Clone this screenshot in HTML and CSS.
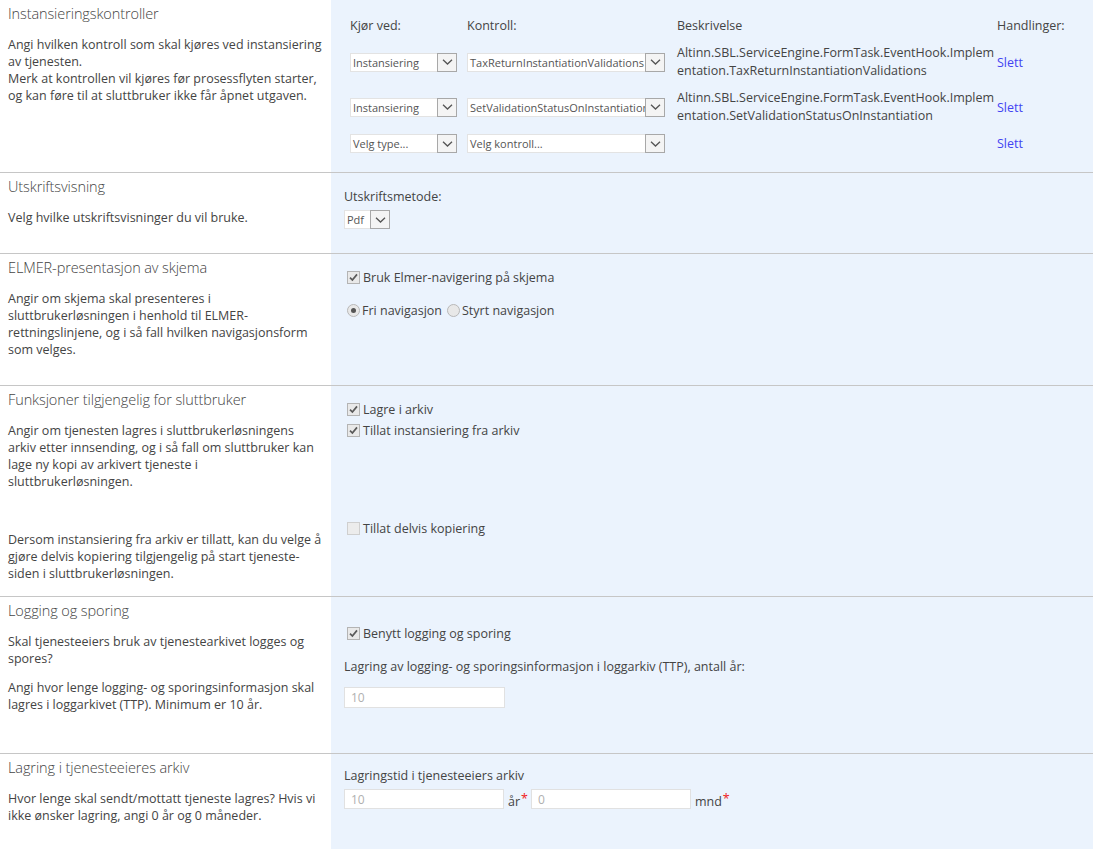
FILE: index.html
```html
<!DOCTYPE html>
<html lang="no">
<head>
    <meta charset="UTF-8">
    <title>Tjenesteinnstillinger</title>
    <link rel="stylesheet" href="styles.css">
</head>
<body>
<div class="page">

    <!-- Instansieringskontroller -->
    <div class="section sec-instans">
        <div class="info">
            <h2 class="title">Instansieringskontroller</h2>
            <p class="desc">Angi hvilken kontroll som skal kjøres ved instansiering av tjenesten.<br>Merk at kontrollen vil kjøres før prosessflyten starter, og kan føre til at sluttbruker ikke får åpnet utgaven.</p>
        </div>
        <div class="controls">
            <div class="hook-grid">
                <div class="col-head">Kjør ved:</div>
                <div class="col-head">Kontroll:</div>
                <div class="col-head">Beskrivelse</div>
                <div class="col-head">Handlinger:</div>

                <div class="dropdown dd-type"><span class="dd-text">Instansiering</span><span class="dd-arrow"><svg width="11" height="6" viewBox="0 0 11 6"><path d="M1 0.8l4.5 4.2 4.5-4.2" fill="none" stroke="#555" stroke-width="1.3"/></svg></span></div>
                <div class="dropdown dd-hook"><span class="dd-text">TaxReturnInstantiationValidations</span><span class="dd-arrow"><svg width="11" height="6" viewBox="0 0 11 6"><path d="M1 0.8l4.5 4.2 4.5-4.2" fill="none" stroke="#555" stroke-width="1.3"/></svg></span></div>
                <div class="hook-desc">Altinn.SBL.ServiceEngine.FormTask.EventHook.Implementation.TaxReturnInstantiationValidations</div>
                <a class="action" href="#">Slett</a>

                <div class="dropdown dd-type"><span class="dd-text">Instansiering</span><span class="dd-arrow"><svg width="11" height="6" viewBox="0 0 11 6"><path d="M1 0.8l4.5 4.2 4.5-4.2" fill="none" stroke="#555" stroke-width="1.3"/></svg></span></div>
                <div class="dropdown dd-hook"><span class="dd-text">SetValidationStatusOnInstantiation</span><span class="dd-arrow"><svg width="11" height="6" viewBox="0 0 11 6"><path d="M1 0.8l4.5 4.2 4.5-4.2" fill="none" stroke="#555" stroke-width="1.3"/></svg></span></div>
                <div class="hook-desc">Altinn.SBL.ServiceEngine.FormTask.EventHook.Implementation.SetValidationStatusOnInstantiation</div>
                <a class="action" href="#">Slett</a>

                <div class="dropdown dd-type"><span class="dd-text">Velg type...</span><span class="dd-arrow"><svg width="11" height="6" viewBox="0 0 11 6"><path d="M1 0.8l4.5 4.2 4.5-4.2" fill="none" stroke="#555" stroke-width="1.3"/></svg></span></div>
                <div class="dropdown dd-hook"><span class="dd-text">Velg kontroll...</span><span class="dd-arrow"><svg width="11" height="6" viewBox="0 0 11 6"><path d="M1 0.8l4.5 4.2 4.5-4.2" fill="none" stroke="#555" stroke-width="1.3"/></svg></span></div>
                <div class="hook-desc"></div>
                <a class="action" href="#">Slett</a>
            </div>
        </div>
    </div>

    <!-- Utskriftsvisning -->
    <div class="section sec-print">
        <div class="info">
            <h2 class="title">Utskriftsvisning</h2>
            <p class="desc">Velg hvilke utskriftsvisninger du vil bruke.</p>
        </div>
        <div class="controls">
            <div class="field-label">Utskriftsmetode:</div>
            <div class="dropdown dd-small"><span class="dd-text">Pdf</span><span class="dd-arrow"><svg width="11" height="6" viewBox="0 0 11 6"><path d="M1 0.8l4.5 4.2 4.5-4.2" fill="none" stroke="#555" stroke-width="1.3"/></svg></span></div>
        </div>
    </div>

    <!-- ELMER -->
    <div class="section sec-elmer">
        <div class="info">
            <h2 class="title">ELMER-presentasjon av skjema</h2>
            <p class="desc">Angir om skjema skal presenteres i sluttbrukerløsningen i henhold til ELMER-rettningslinjene, og i så fall hvilken navigasjonsform som velges.</p>
        </div>
        <div class="controls">
            <div class="option"><span class="check on"><svg width="11" height="11" viewBox="0 0 11 11"><path d="M2 5.6l2.4 2.4 4.6-5.6" fill="none" stroke="#5a5a5a" stroke-width="1.7"/></svg></span>Bruk Elmer-navigering på skjema</div>
            <div class="option radios">
                <span class="radio on"></span>Fri navigasjon
                <span class="radio"></span>Styrt navigasjon
            </div>
        </div>
    </div>

    <!-- Funksjoner -->
    <div class="section sec-functions">
        <div class="info">
            <h2 class="title">Funksjoner tilgjengelig for sluttbruker</h2>
            <p class="desc">Angir om tjenesten lagres i sluttbrukerløsningens<br>arkiv etter innsending, og i så fall om sluttbruker kan lage ny kopi av arkivert tjeneste i sluttbrukerløsningen.</p>
            <p class="desc desc-far">Dersom instansiering fra arkiv er tillatt, kan du velge å gjøre delvis kopiering tilgjengelig på start tjeneste-siden i sluttbrukerløsningen.</p>
        </div>
        <div class="controls">
            <div class="option"><span class="check on"><svg width="11" height="11" viewBox="0 0 11 11"><path d="M2 5.6l2.4 2.4 4.6-5.6" fill="none" stroke="#5a5a5a" stroke-width="1.7"/></svg></span>Lagre i arkiv</div>
            <div class="option tight"><span class="check on"><svg width="11" height="11" viewBox="0 0 11 11"><path d="M2 5.6l2.4 2.4 4.6-5.6" fill="none" stroke="#5a5a5a" stroke-width="1.7"/></svg></span>Tillat instansiering fra arkiv</div>
            <div class="option far"><span class="check"></span>Tillat delvis kopiering</div>
        </div>
    </div>

    <!-- Logging -->
    <div class="section sec-logging">
        <div class="info">
            <h2 class="title">Logging og sporing</h2>
            <p class="desc">Skal tjenesteeiers bruk av tjenestearkivet logges og spores?</p>
            <p class="desc">Angi hvor lenge logging- og sporingsinformasjon skal lagres i loggarkivet (TTP). Minimum er 10 år.</p>
        </div>
        <div class="controls">
            <div class="option"><span class="check on"><svg width="11" height="11" viewBox="0 0 11 11"><path d="M2 5.6l2.4 2.4 4.6-5.6" fill="none" stroke="#5a5a5a" stroke-width="1.7"/></svg></span>Benytt logging og sporing</div>
            <div class="field-label spaced">Lagring av logging- og sporingsinformasjon i loggarkiv (TTP), antall år:</div>
            <input class="text-input" type="text" value="10">
        </div>
    </div>

    <!-- Lagring -->
    <div class="section sec-storage">
        <div class="info">
            <h2 class="title">Lagring i tjenesteeieres arkiv</h2>
            <p class="desc">Hvor lenge skal sendt/mottatt tjeneste lagres? Hvis vi<br>ikke ønsker lagring, angi 0 år og 0 måneder.</p>
        </div>
        <div class="controls">
            <div class="field-label">Lagringstid i tjenesteeiers arkiv</div>
            <div class="period">
                <input class="text-input slim" type="text" value="10">
                <span class="unit">år<span class="req">*</span></span>
                <input class="text-input slim" type="text" value="0">
                <span class="unit">mnd<span class="req">*</span></span>
            </div>
        </div>
    </div>

</div>
</body>
</html>
```

FILE: styles.css
```css
body {
    margin: 0;
    font-family: "Open Sans", "Segoe UI", sans-serif;
    font-size: 12.5px;
    color: #444;
}

.page {
    display: flex;
    flex-direction: column;
    min-height: 100vh;
}

.section {
    display: flex;
    box-sizing: border-box;
    border-top: 1px solid #c6c6c6;
}

.section:first-child {
    border-top: none;
}

.sec-instans { min-height: 172px; }
.sec-print { min-height: 81px; }
.sec-elmer { min-height: 132px; }
.sec-functions { min-height: 211px; }
.sec-logging { min-height: 157px; }
.sec-storage { flex: 1; }

/* left column */
.info {
    width: 331px;
    flex: none;
    box-sizing: border-box;
    padding: 4px 8px 0 8px;
    background-color: #fff;
}

.title {
    margin: 0;
    font-size: 14.5px;
    font-weight: 300;
    letter-spacing: -0.1px;
    line-height: 20px;
    color: #444;
}

.desc {
    margin: 12px 0 0;
    line-height: 17px;
}

.desc-far {
    margin-top: 41px;
}

/* right column */
.controls {
    flex: 1;
    background-color: #ebf3fd;
    padding: 14px 13px 0;
}

.sec-logging .controls {
    padding-top: 27px;
}

.sec-storage .controls {
    padding-top: 12px;
}

.field-label {
    line-height: 19px;
    margin-bottom: 4px;
}

.field-label.spaced {
    margin-top: 14px;
    margin-bottom: 11px;
}

/* hook table */
.hook-grid {
    display: grid;
    grid-template-columns: 117px 210px 320px auto;
    row-gap: 9px;
    align-items: center;
    margin: 3px 0 0 6px;
}

.col-head {
    line-height: 18px;
}

.hook-desc {
    width: 318px;
    line-height: 18px;
    word-break: break-all;
}

.action {
    color: #4343f2;
    text-decoration: none;
}

/* dropdowns */
.dropdown {
    display: flex;
    height: 19px;
    box-sizing: border-box;
    background-color: #fff;
    border: 1px solid #e3e3e3;
    border-right: none;
}

.dd-type { width: 107px; }
.dd-hook { width: 198px; }
.dd-small { width: 46px; }

.dd-text {
    flex: 1;
    overflow: hidden;
    white-space: nowrap;
    padding-left: 2px;
    font-size: 11px;
    line-height: 17px;
    color: #555;
}

.dd-arrow {
    width: 20px;
    flex: none;
    box-sizing: border-box;
    margin-top: -1px;
    height: 19px;
    border: 1px solid #a8a8a8;
    background-color: #f4f4f4;
    display: flex;
    align-items: center;
    justify-content: center;
}

/* checkboxes and radios */
.option {
    display: flex;
    align-items: center;
    height: 19px;
}

.option + .option {
    margin-top: 14px;
}

.option.tight {
    margin-top: 2px;
}

.option.far {
    margin-top: 79px;
}

.check {
    width: 13px;
    height: 13px;
    box-sizing: border-box;
    margin: 0 3px;
    border: 1px solid #b4b4b4;
    background-color: #e9e9e9;
    display: flex;
    align-items: center;
    justify-content: center;
}

.check:not(.on) {
    background-color: #ececec;
    border-color: #cfcfcf;
}

.radio {
    width: 13px;
    height: 13px;
    box-sizing: border-box;
    margin: 0 2px 0 3px;
    border: 1px solid #b8b8b8;
    border-radius: 50%;
    background-color: #e8e8e8;
    display: inline-flex;
    align-items: center;
    justify-content: center;
}

.radios .radio:nth-of-type(2) {
    margin-left: 5px;
}

.radio.on::after {
    content: "";
    width: 5px;
    height: 5px;
    border-radius: 50%;
    background-color: #555;
}

/* text inputs */
.text-input {
    display: block;
    width: 161px;
    height: 21px;
    box-sizing: border-box;
    margin: 0;
    padding: 0 6px;
    border: 1px solid #e1e1e1;
    background-color: #fff;
    font-family: inherit;
    font-size: 12px;
    color: #b0b0b0;
    outline: none;
}

.text-input.slim {
    width: 160px;
    height: 20px;
}

.period {
    display: flex;
    align-items: flex-end;
}

.unit {
    margin: 0 3px 0 4px;
    line-height: 16px;
    position: relative;
    top: 1px;
}

.req {
    color: #f02020;
    position: relative;
    top: -3px;
    margin-left: 1px;
}
```
